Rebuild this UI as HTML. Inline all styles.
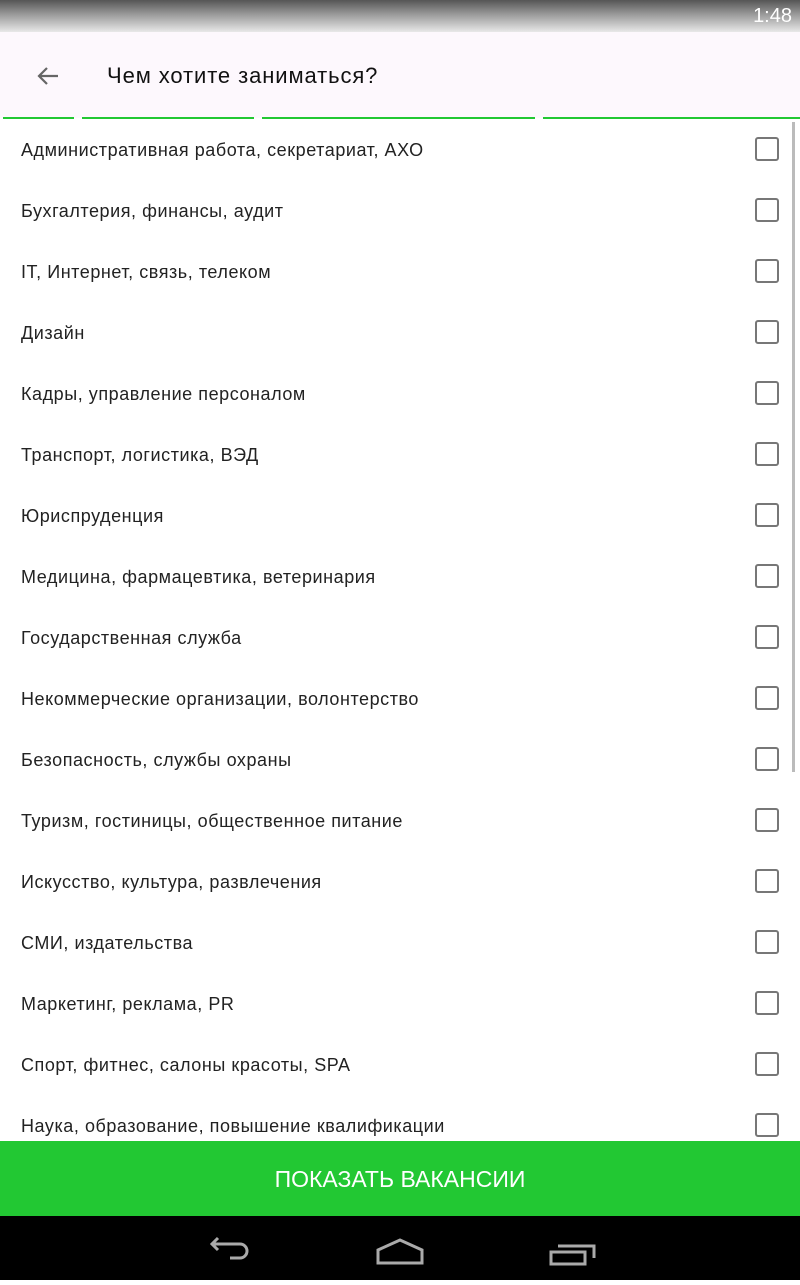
<!DOCTYPE html>
<html><head><meta charset="utf-8"><style>
body{margin:0;width:800px;height:1280px;overflow:hidden;position:relative;background:#fff;font-family:"Liberation Sans",sans-serif}
.sb{position:absolute;left:0;top:0;width:800px;height:32px;background:linear-gradient(#555,#9a9a9a 45%,#e8e8e8)}
.sb span{position:absolute;right:8px;top:5px;color:#fff;font-size:20px}
.ab{position:absolute;top:32px;left:0;width:800px;height:86px;background:#fdf8fd}
.ab .t{position:absolute;left:107px;top:31px;font-size:22px;letter-spacing:0.9px;color:#111}
.g{position:absolute;top:117px;height:2px;background:#22c833}
.row{position:absolute;left:21px;font-size:18px;letter-spacing:0.55px;color:#222}
.cb{position:absolute;left:755px;width:20px;height:20px;border:2px solid #777;border-radius:3px}
.scr{position:absolute;left:792px;top:122px;width:3px;height:650px;background:#bbb}
.btn{position:absolute;top:1141px;left:0;width:800px;height:75px;background:#22c833;color:#fff;font-size:23px;text-align:center;line-height:77px}
.nav{position:absolute;top:1216px;left:0;width:800px;height:64px;background:#000}
</style></head><body>
<div class="sb"><span>1:48</span></div>
<div class="ab">
<svg style="position:absolute;left:36px;top:34px" width="24" height="20" viewBox="0 0 24 20"><path d="M22 10H3M11 2L3 10l8 8" stroke="#666" stroke-width="2.2" fill="none"/></svg>
<div class="t">Чем хотите заниматься?</div></div>
<div class="g" style="left:3px;width:71px"></div>
<div class="g" style="left:82px;width:172px"></div>
<div class="g" style="left:262px;width:273px"></div>
<div class="g" style="left:543px;width:257px"></div>
<div class="scr"></div>
<div class="row" style="top:140px">Административная работа, секретариат, АХО</div><div class="cb" style="top:137px"></div>
<div class="row" style="top:201px">Бухгалтерия, финансы, аудит</div><div class="cb" style="top:198px"></div>
<div class="row" style="top:262px">IT, Интернет, связь, телеком</div><div class="cb" style="top:259px"></div>
<div class="row" style="top:323px">Дизайн</div><div class="cb" style="top:320px"></div>
<div class="row" style="top:384px">Кадры, управление персоналом</div><div class="cb" style="top:381px"></div>
<div class="row" style="top:445px">Транспорт, логистика, ВЭД</div><div class="cb" style="top:442px"></div>
<div class="row" style="top:506px">Юриспруденция</div><div class="cb" style="top:503px"></div>
<div class="row" style="top:567px">Медицина, фармацевтика, ветеринария</div><div class="cb" style="top:564px"></div>
<div class="row" style="top:628px">Государственная служба</div><div class="cb" style="top:625px"></div>
<div class="row" style="top:689px">Некоммерческие организации, волонтерство</div><div class="cb" style="top:686px"></div>
<div class="row" style="top:750px">Безопасность, службы охраны</div><div class="cb" style="top:747px"></div>
<div class="row" style="top:811px">Туризм, гостиницы, общественное питание</div><div class="cb" style="top:808px"></div>
<div class="row" style="top:872px">Искусство, культура, развлечения</div><div class="cb" style="top:869px"></div>
<div class="row" style="top:933px">СМИ, издательства</div><div class="cb" style="top:930px"></div>
<div class="row" style="top:994px">Маркетинг, реклама, PR</div><div class="cb" style="top:991px"></div>
<div class="row" style="top:1055px">Спорт, фитнес, салоны красоты, SPA</div><div class="cb" style="top:1052px"></div>
<div class="row" style="top:1116px">Наука, образование, повышение квалификации</div><div class="cb" style="top:1113px"></div>
<div class="btn">ПОКАЗАТЬ ВАКАНСИИ</div>
<div class="nav"><svg width="800" height="64">
<g stroke="#aaa" stroke-width="3" fill="none">
<path d="M212 28h28a7 7 0 0 1 0 14h-10M218 22l-6 6 6 6"/>
<path d="M378 34l22-10 22 10v13h-44z"/>
<path d="M551 36h34v12h-34zM558 30h36v12"/>
</g></svg></div>
</body></html>
